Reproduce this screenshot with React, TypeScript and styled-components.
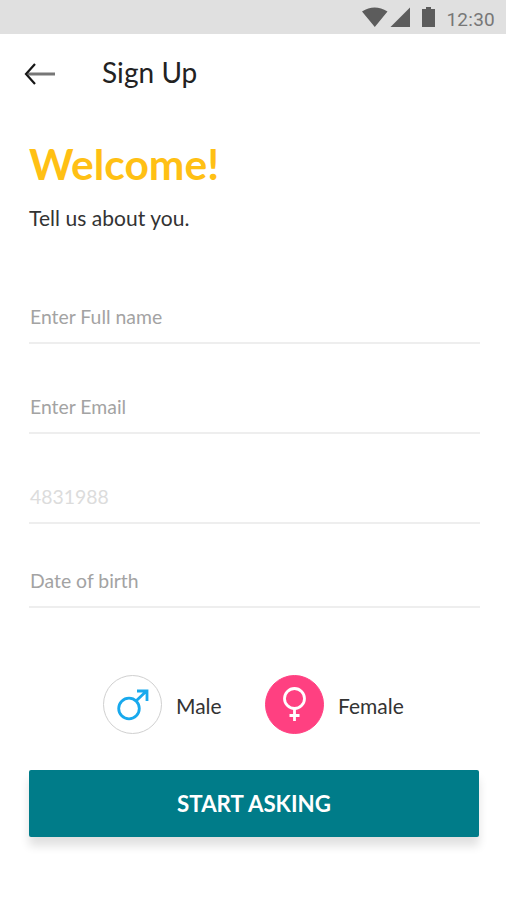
import React from 'react';
import styled, { createGlobalStyle } from 'styled-components';

const Global = createGlobalStyle`
  * { box-sizing: border-box; }
  body { margin: 0; background: #fff; }
`;
const Screen = styled.main`
  width: 506px; height: 900px; background: #fff; overflow: hidden;
  font-family: Lato, sans-serif; color: #222;
  display: flex; flex-direction: column;
`;
const StatusBar = styled.div`
  height: 34px; background: #e0e0e0; display: flex; justify-content: flex-end; align-items: flex-start;
  padding-right: 11px;
`;
const StatusIcons = styled.svg`width: 76px; height: 34px; margin-right: 8px;`;
const Time = styled.time`
  color: #777; font: 19px/34px Roboto, sans-serif; letter-spacing: 0.25px; padding-top: 3px;
`;
const Header = styled.header`height: 78px; display: flex; align-items: center; padding-left: 24px;`;
const BackIcon = styled.svg`width: 32px; height: 24px; margin: 2px 46px 0 0;`;
const Title = styled.h1`margin: -2px 0 0; font-size: 28px; font-weight: 400; line-height: 34px; letter-spacing: 0.05px;`;
const Intro = styled.section`padding: 27px 29px 0; height: 177px;`;
const Welcome = styled.h2`margin: 0; color: #ffc014; font-size: 42.5px; line-height: 50px; font-weight: 700;`;
const Subtitle = styled.p`margin: 16px 0 0; font-size: 21px; line-height: 26px; color: #333; letter-spacing: 0.05px;`;
const Form = styled.div`padding: 0 26px 0 29px;`;
const Field = styled.div<{ $height: number; $pale?: boolean }>`
  height: ${p => p.$height}px; border-bottom: 2px solid #eee; display: flex; align-items: flex-end;
  padding: 0 0 12px 1px; font-size: 19.4px; line-height: 26px; color: ${p => p.$pale ? '#dcdcdc' : '#a3a3a3'};
`;
const Genders = styled.div`display: flex; margin: 67px 0 0 103px; height: 59px;`;
const Gender = styled.div<{ $width: number }>`width: ${p => p.$width}px; display: flex; align-items: center; gap: 14px;`;
const GenderLabel = styled.span`font-size: 21px; line-height: 26px; padding-top: 2px; color: #333;`;
const Circle = styled.span<{ $selected?: boolean }>`
  width: 59px; height: 59px; border-radius: 50%; display: flex; align-items: center; justify-content: center; flex-shrink: 0;
  background: ${p => p.$selected ? '#ff4081' : '#fff'}; border: 1px solid ${p => p.$selected ? '#ff4081' : '#d0d0d0'};
`;
const GenderIcon = styled.svg`width: 57px; height: 57px; fill: none; stroke-width: 2.8;`;
const Submit = styled.button`
  margin: 36px 27px 0 29px; height: 67px; border: 0; border-radius: 2px; background: #007c89; color: #fff;
  font: 700 22.3px/26px Lato, sans-serif; box-shadow: 0 9px 10px rgba(0,0,0,.12);
`;

export default function App() {
  return (
    <Screen>
      <Global />
      <StatusBar>
        <StatusIcons viewBox="0 0 76 34" fill="#5c5c5c">
          <path d="M0 11.5Q12.5 3.5 25.5 11.5L12.8 27ZM28.5 27 48 7.5V27ZM60 9h4V7h5v2h4v18H60Z" />
        </StatusIcons>
        <Time>12:30</Time>
      </StatusBar>
      <Header>
        <BackIcon viewBox="0 0 32 24" fill="none">
          <path d="M4 12H31" stroke="#777" strokeWidth="3" />
          <path d="M11 2 2 12l9 10" stroke="#161616" strokeWidth="2.2" />
        </BackIcon>
        <Title>Sign Up</Title>
      </Header>
      <Intro><Welcome>Welcome!</Welcome><Subtitle>Tell us about you.</Subtitle></Intro>
      <Form>
        <Field $height={55}>Enter Full name</Field>
        <Field $height={90}>Enter Email</Field>
        <Field $height={90} $pale>4831988</Field>
        <Field $height={84}>Date of birth</Field>
      </Form>
      <Genders>
        <Gender $width={162}>
          <Circle>
            <GenderIcon viewBox="0 0 57 57" stroke="#18a9ed">
              <circle cx="25" cy="32.5" r="10.3" />
              <path d="m32 25 10.5-10M33 15h10v10" />
            </GenderIcon>
          </Circle>
          <GenderLabel>Male</GenderLabel>
        </Gender>
        <Gender $width={160}>
          <Circle $selected>
            <GenderIcon viewBox="0 0 57 57" stroke="#fff">
              <circle cx="28.5" cy="22.5" r="10" />
              <path d="M28.5 32.5V45M23.5 39.5h10" />
            </GenderIcon>
          </Circle>
          <GenderLabel>Female</GenderLabel>
        </Gender>
      </Genders>
      <Submit>START ASKING</Submit>
    </Screen>
  );
}
